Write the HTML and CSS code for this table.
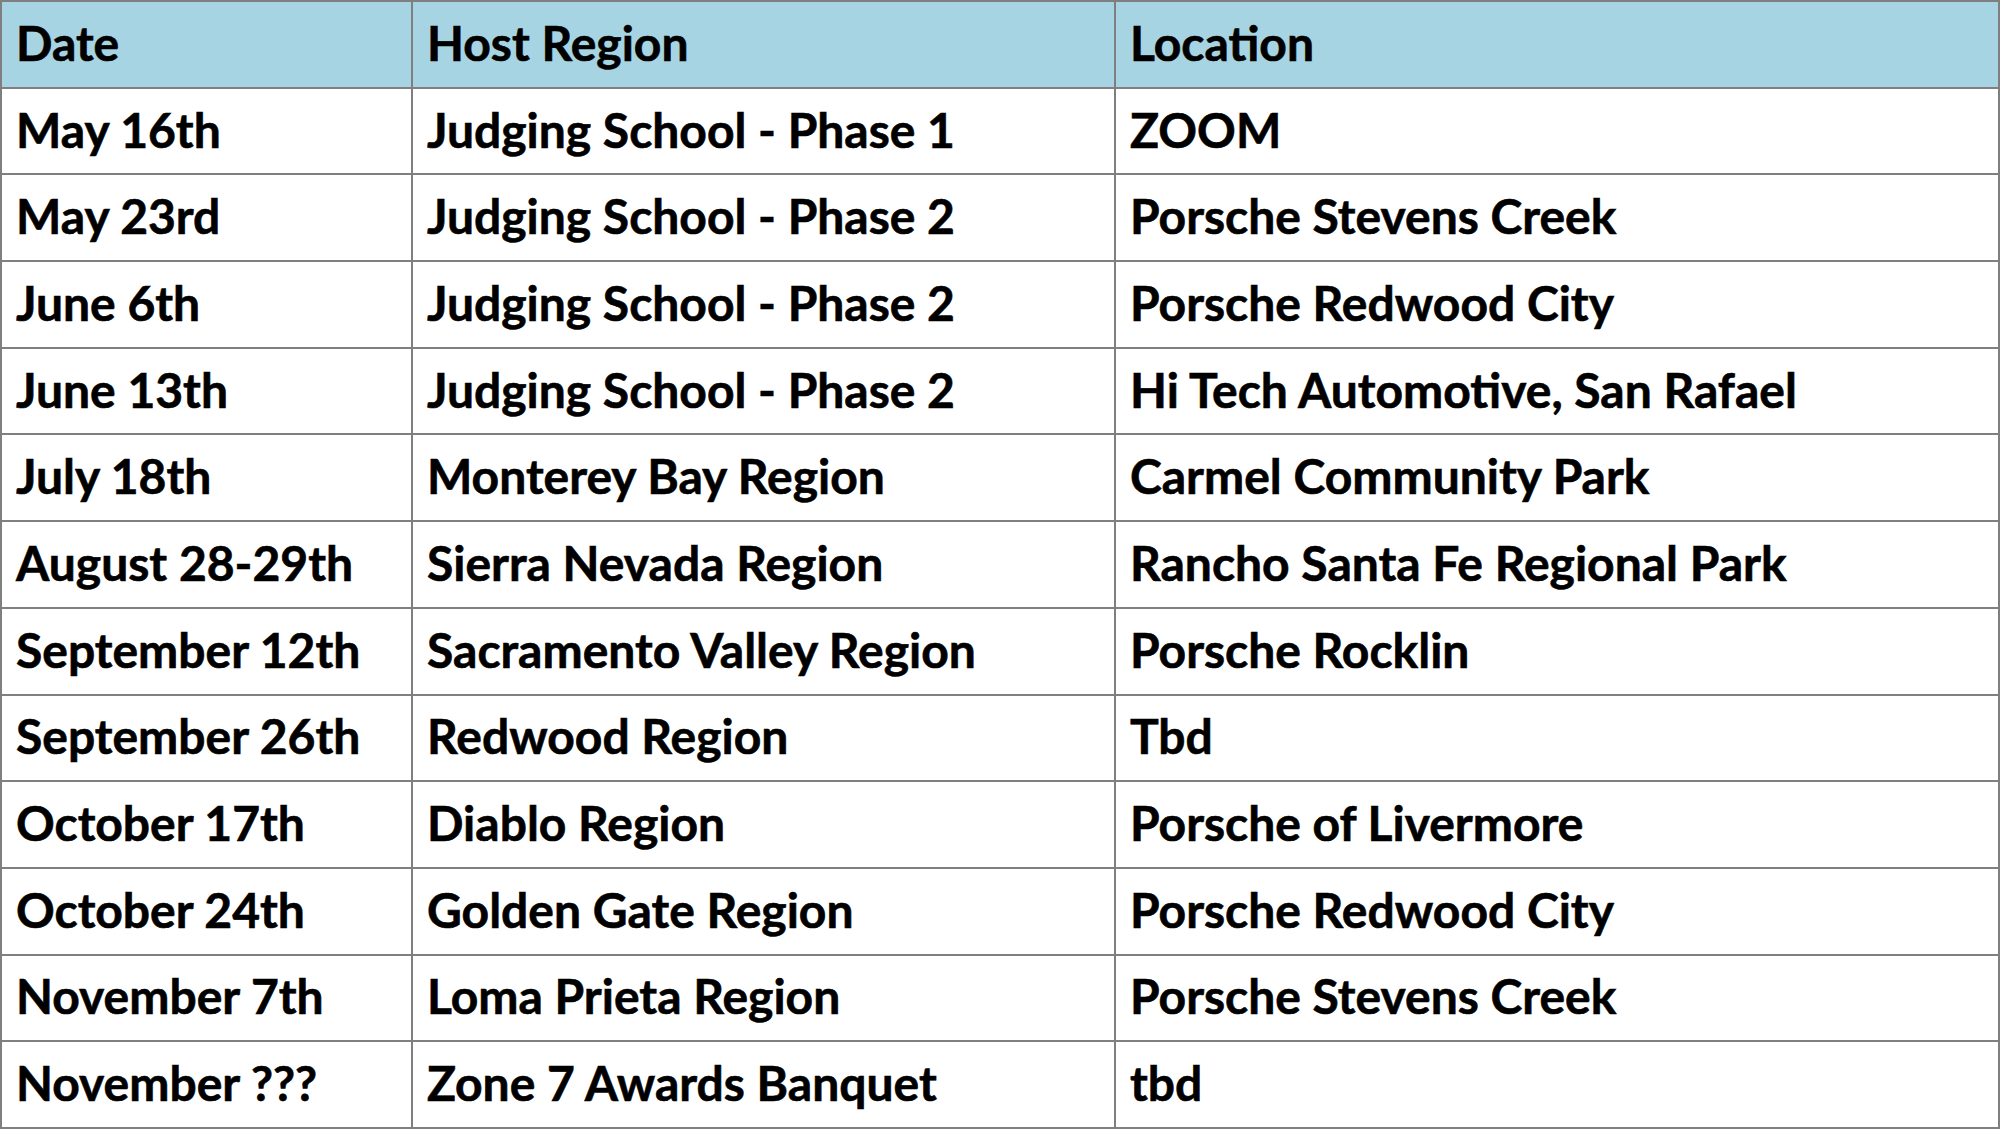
FILE: index.html
```html
<!DOCTYPE html>
<html>
<head>
<meta charset="utf-8">
<link rel="stylesheet" href="styles.css">
</head>
<body>
<div class="schedule">
  <div class="cell head">Date</div><div class="cell head">Host Region</div><div class="cell head">Location</div>
  <div class="cell">May 16th</div><div class="cell">Judging School - Phase 1</div><div class="cell">ZOOM</div>
  <div class="cell">May 23rd</div><div class="cell">Judging School - Phase 2</div><div class="cell">Porsche Stevens Creek</div>
  <div class="cell">June 6th</div><div class="cell">Judging School - Phase 2</div><div class="cell">Porsche Redwood City</div>
  <div class="cell">June 13th</div><div class="cell">Judging School - Phase 2</div><div class="cell">Hi Tech Automotive, San Rafael</div>
  <div class="cell">July 18th</div><div class="cell">Monterey Bay Region</div><div class="cell">Carmel Community Park</div>
  <div class="cell">August 28-29th</div><div class="cell">Sierra Nevada Region</div><div class="cell">Rancho Santa Fe Regional Park</div>
  <div class="cell">September 12th</div><div class="cell">Sacramento Valley Region</div><div class="cell">Porsche Rocklin</div>
  <div class="cell">September 26th</div><div class="cell">Redwood Region</div><div class="cell">Tbd</div>
  <div class="cell">October 17th</div><div class="cell">Diablo Region</div><div class="cell">Porsche of Livermore</div>
  <div class="cell">October 24th</div><div class="cell">Golden Gate Region</div><div class="cell">Porsche Redwood City</div>
  <div class="cell">November 7th</div><div class="cell">Loma Prieta Region</div><div class="cell">Porsche Stevens Creek</div>
  <div class="cell">November ???</div><div class="cell">Zone 7 Awards Banquet</div><div class="cell">tbd</div>
</div>
</body>
</html>
```
FILE: styles.css
```css
html, body {
  margin: 0;
  padding: 0;
  background: #ffffff;
}
.schedule {
  display: grid;
  grid-template-columns: 411px 703px 884px;
  grid-template-rows: repeat(13, 1fr);
  width: 2000px;
  height: 1129px;
  box-sizing: border-box;
  border-top: 2px solid #7f7f7f;
  border-left: 2px solid #7f7f7f;
  font-family: Lato, "Open Sans", sans-serif;
  font-weight: 700;
  font-size: 48px;
  -webkit-text-stroke: 0.6px #000;
  color: #000;
}
.cell {
  display: flex;
  align-items: center;
  padding-left: 14px;
  padding-bottom: 4px;
  border-right: 2px solid #7f7f7f;
  border-bottom: 2px solid #7f7f7f;
  white-space: nowrap;
  background: #ffffff;
}
.head {
  background: #a6d4e2;
}
```
